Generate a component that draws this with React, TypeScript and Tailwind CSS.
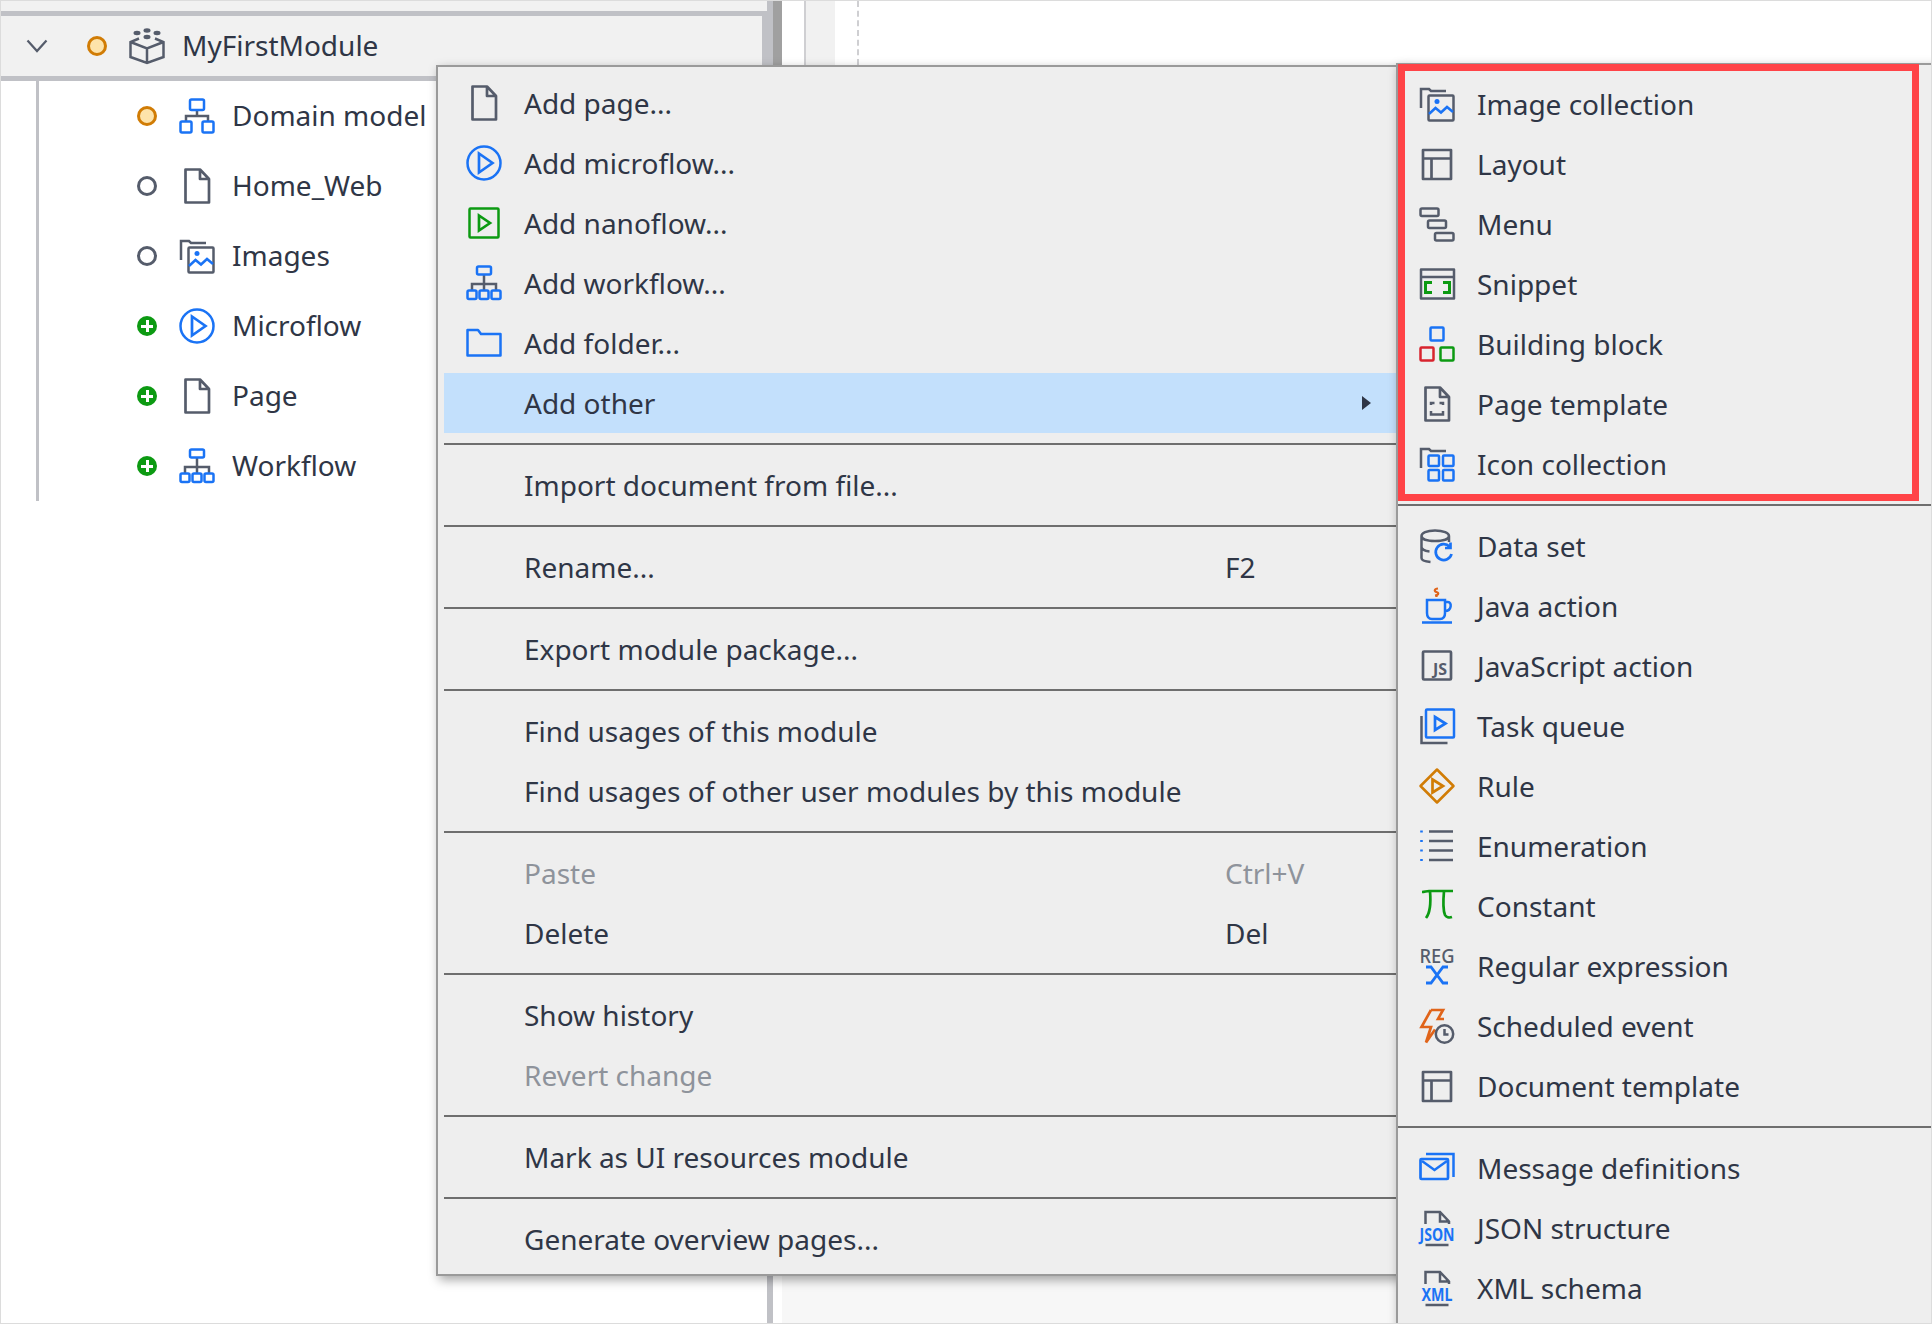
import React from 'react';

const GRAY = '#555c6b';
const BLUE = '#1a73f5';
const GREEN = '#0c9a12';
const ORANGE = '#d17c05';
const RED = '#d8232e';

type IconName =
  | 'page' | 'microflow' | 'nanoflow' | 'workflow' | 'folder' | 'domain' | 'images' | 'module'
  | 'layout' | 'menu' | 'snippet' | 'block' | 'template' | 'iconset' | 'dataset' | 'java' | 'js'
  | 'queue' | 'rule' | 'enum' | 'constant' | 'regex' | 'event' | 'message' | 'json' | 'xml';

const FolderCorner = () => <path d="M2 22V3h8l2 2h15" stroke={GRAY} />;

const Glyph = ({ name }: { name: IconName }) => {
  switch (name) {
    case 'page':
      return <path d="M6.500 1.500H21l9 9.500v23.500H6.500ZM21 1.500V11h9" stroke={GRAY} strokeWidth="2.700" strokeLinejoin="round" />;
    case 'microflow':
      return (
        <g stroke={BLUE}>
          <circle cx="18" cy="18" r="16.500" />
          <path d="M13 8.500 26.500 18 13 27.500Z" strokeWidth="2.700" />
        </g>
      );
    case 'nanoflow':
      return (
        <g stroke={GREEN}>
          <rect x="3.500" y="3.500" width="29" height="29" rx="1" />
          <path d="M13 10.500 24 18l-11 7.500Z" strokeWidth="2.700" />
        </g>
      );
    case 'workflow':
      return (
        <g>
          <path d="M18 9v10M6 25v-6h24v6M18 19v6" stroke={GRAY} />
          <g stroke={BLUE}>
            <rect x="11" y="1.500" width="14" height="8" rx="1.500" />
            <rect x="1.500" y="25.500" width="9" height="8.500" rx="1.500" />
            <rect x="13.500" y="25.500" width="9" height="8.500" rx="1.500" />
            <rect x="25.500" y="25.500" width="9" height="8.500" rx="1.500" />
          </g>
        </g>
      );
    case 'folder':
      return <path d="M1.500 5h10.500l3 4h19.500v21.500H1.500Z" stroke={BLUE} strokeLinejoin="round" />;
    case 'domain':
      return (
        <g>
          <path d="M18 12v6M7 24v-6h22v6" stroke={GRAY} />
          <g stroke={BLUE}>
            <rect x="11" y="1.500" width="14" height="10.500" rx="1.500" />
            <rect x="1.500" y="23.500" width="11" height="11" rx="1.500" />
            <rect x="23.500" y="23.500" width="11" height="11" rx="1.500" />
          </g>
        </g>
      );
    case 'images':
      return (
        <g>
          <FolderCorner />
          <rect x="9.500" y="9.500" width="25" height="25" rx="1" stroke={GRAY} />
          <circle cx="18" cy="15.500" r="2.500" fill={BLUE} />
          <path d="M10 28l6.500-6 5.500 4.500 6-5.500 6 5" stroke={BLUE} />
        </g>
      );
    case 'module':
      return (
        <g stroke={GRAY}>
          <path d="M10 10.500 1.500 14v15L18 35l16.500-6V14L26 10.500M1.500 14 18 20.500 34.500 14M18 20.500V35" />
          <g fill={GRAY} stroke="none">
            <ellipse cx="8" cy="5" rx="3.500" ry="2.200" />
            <ellipse cx="18" cy="2.500" rx="3.500" ry="2.200" />
            <ellipse cx="28" cy="5" rx="3.500" ry="2.200" />
            <ellipse cx="18" cy="9" rx="3.500" ry="2.200" />
          </g>
        </g>
      );
    case 'layout':
      return <path d="M4 4h28v29H4ZM4 12.500h28M12.500 12.500V33" stroke={GRAY} strokeWidth="2.700" strokeLinejoin="round" />;
    case 'menu':
      return (
        <g stroke={GRAY}>
          <rect x="1.500" y="2.500" width="18" height="7.500" rx="1.500" />
          <rect x="9" y="14.500" width="18" height="7.500" rx="1.500" />
          <rect x="16" y="27" width="18.500" height="7.500" rx="1.500" />
        </g>
      );
    case 'snippet':
      return (
        <g>
          <path d="M2 3.500h33v29H2ZM2 11h33" stroke={GRAY} strokeLinejoin="round" />
          <path d="M13 16.500H6.500v10H13M24 16.500h6.500v10H24" stroke={GREEN} strokeWidth="3" />
        </g>
      );
    case 'block':
      return (
        <g>
          <rect x="11.500" y="1.500" width="13" height="13" rx="1" stroke={BLUE} />
          <rect x="1.500" y="21.500" width="13" height="13" rx="1" stroke={RED} />
          <rect x="21.500" y="21.500" width="13" height="13" rx="1" stroke={GREEN} />
        </g>
      );
    case 'template':
      return (
        <g stroke={GRAY}>
          <path d="M6.500 1.500H21l9 9.500v23.500H6.500ZM21 1.500V11h9" strokeWidth="2.700" strokeLinejoin="round" />
          <path d="M12 19v-2h3.500M20.500 17H24v2M12 25v3.500h12V25" />
        </g>
      );
    case 'iconset':
      return (
        <g>
          <FolderCorner />
          <g stroke={BLUE}>
            <rect x="9.500" y="9.500" width="10.500" height="10.500" rx="1" />
            <rect x="24" y="9.500" width="10.500" height="10.500" rx="1" />
            <rect x="9.500" y="24" width="10.500" height="10.500" rx="1" />
            <rect x="24" y="24" width="10.500" height="10.500" rx="1" />
          </g>
        </g>
      );
    case 'dataset':
      return (
        <g>
          <path d="M30 8c0 3-5.500 5-14 5S2.500 11 2.500 8 7.500 2.500 16 2.500 30 5 30 8ZM2.500 8v22c0 2 3 3.500 9 4M2.500 19c0 2 3 4 8 4.500M30 8v6" stroke={GRAY} />
          <path d="M32.500 26a8 8 0 1 1-2-7.500M31.500 14.500V20H26" stroke={BLUE} strokeWidth="2.700" />
        </g>
      );
    case 'java':
      return (
        <g>
          <path d="M19 0.500c-4 0.500-4 3 -1.500 3.500s2.500 3-1.500 3.500M17.500 0v1M17.500 7v2" stroke="#e0641a" strokeWidth="2.200" />
          <path d="M8 12h18v13c0 4-2 6-5 6h-8c-3 0-5-2-5-6ZM26 14h3c4 0 4 9-3 9M3 34.500h30" stroke={BLUE} />
        </g>
      );
    case 'js':
      return (
        <g>
          <rect x="4" y="3.500" width="28" height="28" rx="1" stroke={GRAY} strokeWidth="2.700" />
          <text x="28" y="27" textAnchor="end" fontFamily="'Noto Sans', sans-serif" fontSize="16" fontWeight="700" fill={GRAY}>JS</text>
        </g>
      );
    case 'queue':
      return (
        <g>
          <path d="M2.500 8v27h26" stroke={GRAY} />
          <rect x="7" y="1.500" width="28" height="28" rx="1" stroke={BLUE} />
          <path d="M16 9l10.500 6.500L16 22Z" stroke={BLUE} strokeWidth="2.700" />
        </g>
      );
    case 'rule':
      return (
        <g stroke={ORANGE}>
          <path d="M18 1.500 34.500 18 18 34.500 1.500 18Z" strokeLinejoin="round" />
          <path d="M13.500 11.500 24 18l-10.500 6.500Z" strokeWidth="2.700" />
        </g>
      );
    case 'enum':
      return (
        <g>
          <path d="M10 3.500h24M10 13h24M10 22.500h24M10 32h24" stroke={GRAY} />
          <path d="M2.500 2.500v2M2.500 12v2M2.500 21.500v2M2.500 31v2" stroke={BLUE} strokeWidth="2.600" />
        </g>
      );
    case 'constant':
      return <path d="M3 4c3 0 4-1 7-1h24M11 3c1 12 0 22-4 27M25 3c-1 11-1 19 1 24 1 2 4 3 7 2" stroke={GREEN} strokeWidth="2.700" />;
    case 'regex':
      return (
        <g>
          <text x="18" y="15" textAnchor="middle" fontFamily="'Noto Sans', sans-serif" fontSize="19" fontWeight="500" textLength="35" lengthAdjust="spacingAndGlyphs" fill={GRAY}>REG</text>
          <path d="M7 19h5l12 16h5M7 35h5l12-16h5" stroke={BLUE} strokeWidth="2.800" />
        </g>
      );
    case 'event':
      return (
        <g>
          <path d="M12 2h12l-5 9h6M12 2 2.500 19H12L7 34.500l9-13" stroke="#e0641a" strokeWidth="2.700" />
          <circle cx="25.500" cy="26" r="8.700" stroke={GRAY} />
          <path d="M25.500 21v5.500h4" stroke={GRAY} />
        </g>
      );
    case 'message':
      return (
        <g stroke={BLUE}>
          <path d="M7 4h27.500v23" />
          <rect x="1.500" y="9" width="27.500" height="20" rx="1" strokeWidth="2.700" />
          <path d="M3 11l12.500 9L28 11" strokeWidth="2.500" />
        </g>
      );
    case 'json':
    case 'xml':
      return (
        <g>
          <path d="M6.500 14V2H21l9 9.500V14M21 2v9.500h9M6.500 35h23" stroke={GRAY} />
          <text x="18" y="31" textAnchor="middle" fontFamily="'Noto Sans', sans-serif" fontSize="17" fontWeight="700" textLength={name === 'json' ? 35 : 31} lengthAdjust="spacingAndGlyphs" fill={BLUE}>
            {name === 'json' ? 'JSON' : 'XML'}
          </text>
        </g>
      );
  }
};

const Icon = ({ name }: { name: IconName }) => (
  <svg className="overflow-visible" width="36" height="36" viewBox="0 0 36 36" fill="none" strokeWidth="2.500">
    <Glyph name={name} />
  </svg>
);

type Status = 'changed' | 'same' | 'added';

const StatusDot = ({ status }: { status: Status }) => {
  if (status === 'added') {
    return (
      <span className="relative block size-[20px] rounded-full bg-[#0c9a12]">
        <span className="absolute left-[4px] top-[8.500px] h-[3px] w-[12px] bg-white" />
        <span className="absolute left-[8.500px] top-[4px] h-[12px] w-[3px] bg-white" />
      </span>
    );
  }
  if (status === 'changed') {
    return <span className="block size-[20px] rounded-full border-[3px] border-[#d17c05] bg-[#fde3ab]" />;
  }
  return <span className="block size-[20px] rounded-full border-[3px] border-[#555c6b]" />;
};

const treeItems: { label: string; icon: IconName; status: Status }[] = [
  { label: 'Domain model', icon: 'domain', status: 'changed' },
  { label: 'Home_Web', icon: 'page', status: 'same' },
  { label: 'Images', icon: 'images', status: 'same' },
  { label: 'Microflow', icon: 'microflow', status: 'added' },
  { label: 'Page', icon: 'page', status: 'added' },
  { label: 'Workflow', icon: 'workflow', status: 'added' },
];

type MenuRow = { label: string; icon?: IconName; shortcut?: string; disabled?: boolean; active?: boolean; submenu?: boolean };

// each inner array is one block between separators
const mainMenu: MenuRow[][] = [
  [
    { label: 'Add page...', icon: 'page' },
    { label: 'Add microflow...', icon: 'microflow' },
    { label: 'Add nanoflow...', icon: 'nanoflow' },
    { label: 'Add workflow...', icon: 'workflow' },
    { label: 'Add folder...', icon: 'folder' },
    { label: 'Add other', active: true, submenu: true },
  ],
  [{ label: 'Import document from file...' }],
  [{ label: 'Rename...', shortcut: 'F2' }],
  [{ label: 'Export module package...' }],
  [{ label: 'Find usages of this module' }, { label: 'Find usages of other user modules by this module' }],
  [{ label: 'Paste', shortcut: 'Ctrl+V', disabled: true }, { label: 'Delete', shortcut: 'Del' }],
  [{ label: 'Show history' }, { label: 'Revert change', disabled: true }],
  [{ label: 'Mark as UI resources module' }],
  [{ label: 'Generate overview pages...' }],
];

const subMenu: MenuRow[][] = [
  [
    { label: 'Image collection', icon: 'images' },
    { label: 'Layout', icon: 'layout' },
    { label: 'Menu', icon: 'menu' },
    { label: 'Snippet', icon: 'snippet' },
    { label: 'Building block', icon: 'block' },
    { label: 'Page template', icon: 'template' },
    { label: 'Icon collection', icon: 'iconset' },
  ],
  [
    { label: 'Data set', icon: 'dataset' },
    { label: 'Java action', icon: 'java' },
    { label: 'JavaScript action', icon: 'js' },
    { label: 'Task queue', icon: 'queue' },
    { label: 'Rule', icon: 'rule' },
    { label: 'Enumeration', icon: 'enum' },
    { label: 'Constant', icon: 'constant' },
    { label: 'Regular expression', icon: 'regex' },
    { label: 'Scheduled event', icon: 'event' },
    { label: 'Document template', icon: 'layout' },
  ],
  [
    { label: 'Message definitions', icon: 'message' },
    { label: 'JSON structure', icon: 'json' },
    { label: 'XML schema', icon: 'xml' },
  ],
];

const Row = ({ row, iconBox }: { row: MenuRow; iconBox: string }) => (
  <div className={`flex h-[60px] items-center ${row.active ? 'bg-[#c3e0fc]' : ''} ${row.disabled ? 'text-[#8e939b]' : ''}`}>
    <div className={`flex shrink-0 items-center justify-center ${iconBox}`}>{row.icon && <Icon name={row.icon} />}</div>
    <span className="flex-1 whitespace-nowrap">{row.label}</span>
    {row.shortcut && <span className="w-[172px] whitespace-nowrap">{row.shortcut}</span>}
    {row.submenu && <span className="mr-[26px] h-0 w-0 border-y-[7px] border-l-[9px] border-y-transparent border-l-[#2f3646]" />}
  </div>
);

const Menu = ({ groups, iconBox }: { groups: MenuRow[][]; iconBox: string }) => (
  <>
    {groups.map((group, i) => (
      <div key={i}>
        {i > 0 && <div className="my-[10px] h-[2px] bg-[#6e6e6e]" />}
        {group.map(row => (
          <Row key={row.label} row={row} iconBox={iconBox} />
        ))}
      </div>
    ))}
  </>
);

export default function App() {
  return (
    <div className="relative h-[1324px] w-[1932px] overflow-hidden border border-[#dcdcdc] bg-white font-['Noto_Sans',sans-serif] text-[28px] leading-none text-[#2f3646]">
      <div className="flex h-full">
        {/* Project tree */}
        <aside className="w-[772px] shrink-0 border-r-[6px] border-[#c0c1c6] bg-white">
          <div className="h-[10px] bg-[#f1f1f1]" />
          <div className="flex h-[70px] items-center border-y-[5px] border-r-[5px] border-[#c0c1c6] bg-[#f1f1f1]">
            <svg className="ml-[25px] shrink-0" width="22" height="14" viewBox="0 0 22 14" fill="none" stroke={GRAY} strokeWidth="2.200">
              <path d="M1.500 1.500 11 12l9.500-10.500" />
            </svg>
            <div className="ml-[39px] shrink-0"><StatusDot status="changed" /></div>
            <div className="ml-[22px] shrink-0"><Icon name="module" /></div>
            <span className="-mt-[2px] ml-[17px]">MyFirstModule</span>
          </div>
          <div className="ml-[35px] border-l-[3px] border-[#c0c1c6] pl-[98px]">
            {treeItems.map(item => (
              <div key={item.label} className="flex h-[70px] items-center">
                <StatusDot status={item.status} />
                <div className="ml-[22px]"><Icon name={item.icon} /></div>
                <span className="-mt-[2px] ml-[17px]">{item.label}</span>
              </div>
            ))}
          </div>
        </aside>
        <div className="h-[64px] w-[9px] shrink-0 bg-[#a0a0a0]" />
        {/* Editor area behind the menus */}
        <main className="flex-1 bg-[#f7f7f7]">
          <div className="flex h-[64px] bg-white">
            <div className="w-[22px]" />
            <div className="w-[31px] border-l-2 border-[#cfcfd2] bg-[#f1f1f1]" />
            <div className="ml-[22px] border-l-2 border-dashed border-[#cfcfd2]" />
          </div>
        </main>
      </div>

      {/* Context menu */}
      <div className="absolute left-[435px] top-[64px] w-[969px] border-2 border-[#9a9a9a] bg-[#eeeeee] px-[6px] pb-[5px] pt-[6px] shadow-[3px_4px_10px_rgba(0,0,0,0.35)]">
        <Menu groups={mainMenu} iconBox="w-[80px]" />
      </div>

      {/* Add other submenu */}
      <div className="absolute left-[1395px] top-[62px] w-[560px] border-2 border-[#9a9a9a] bg-[#eeeeee] pb-[60px] pt-[9px] shadow-[3px_4px_10px_rgba(0,0,0,0.35)]">
        <Menu groups={subMenu} iconBox="w-[79px] pr-[2px]" />
      </div>

      {/* Highlight drawn over the screenshot */}
      <div className="absolute left-[1397px] top-[63px] h-[437px] w-[521px] border-[7px] border-[#ff4347]" />
    </div>
  );
}
